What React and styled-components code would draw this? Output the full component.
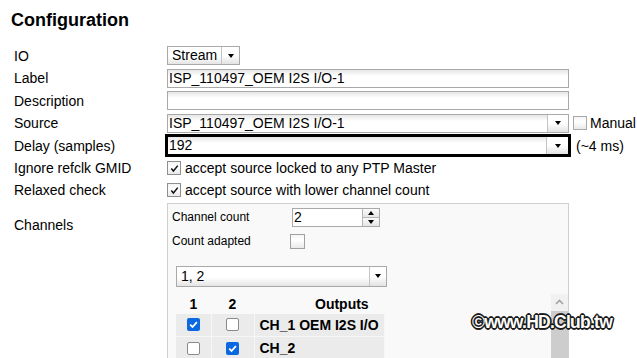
import React from 'react';
import styled, { createGlobalStyle } from 'styled-components';

const GlobalStyle = createGlobalStyle`
  html, body { margin: 0; padding: 0; background: #fff; }
  body {
    font-family: "Liberation Sans", Arial, sans-serif;
    font-size: 14px;
    color: #000;
    overflow: hidden;
  }
  * { box-sizing: border-box; }
`;

const Page = styled.div`
  position: relative;
  width: 637px;
  height: 358px;
  overflow: hidden;
  padding: 10px 0 0 11px;
`;

const Title = styled.h2`
  margin: 0;
  font-size: 18px;
  font-weight: bold;
  line-height: 21px;
`;

const Form = styled.div`
  margin-top: 15px;
  padding-left: 3px;
  display: grid;
  grid-template-columns: 153px auto;
  row-gap: 3.5px;
`;

const Label = styled.div`
  display: flex;
  align-items: ${(p) => (p.$top ? 'flex-start' : 'center')};
  padding-top: ${(p) => (p.$top ? '14px' : '0')};
  line-height: 16px;
  white-space: nowrap;
`;

const Control = styled.div`
  display: flex;
  align-items: center;
  min-height: ${(p) => p.$h || 19}px;
`;

const TextBox = styled.div`
  width: ${(p) => p.$w || 402}px;
  height: 19px;
  border: 1px solid #a9a9a9;
  background: linear-gradient(#e6e6e6, #ffffff 6px);
  padding: 0 1px;
  line-height: 17px;
  white-space: nowrap;
  overflow: hidden;
`;

const SelectBox = styled.div`
  display: flex;
  width: ${(p) => p.$w}px;
  height: ${(p) => p.$h || 19}px;
  border: 1px solid #a9a9a9;
  background: ${(p) =>
    p.$button
      ? 'linear-gradient(#ffffff, #ffffff 55%, #e4e4e4)'
      : 'linear-gradient(#e6e6e6, #ffffff 6px)'};
  outline: ${(p) => (p.$focused ? '3px solid #000' : 'none')};
  outline-offset: -1px;
`;

const SelectValue = styled.div`
  flex: 1;
  padding-left: ${(p) => p.$pad || 1}px;
  line-height: ${(p) => p.$lh || 17}px;
  white-space: nowrap;
  overflow: hidden;
`;

const ArrowButton = styled.div`
  width: ${(p) => p.$w || 20}px;
  border-left: 1px solid #c4c4c4;
  background: linear-gradient(#ffffff, #ffffff 50%, #e2e2e2);
  display: flex;
  align-items: center;
  justify-content: center;
`;

const Triangle = styled.span`
  width: 0;
  height: 0;
  border-left: 3.5px solid transparent;
  border-right: 3.5px solid transparent;
  border-${(p) => (p.$up ? 'bottom' : 'top')}: 4px solid #000;
`;

const CheckBox = styled.span`
  display: inline-flex;
  align-items: center;
  justify-content: center;
  flex: none;
  width: ${(p) => p.$size || 13}px;
  height: ${(p) => p.$size || 13}px;
  border: 1px solid ${(p) => p.$border || '#8f8f8f'};
  background: linear-gradient(#f4f4f4, #ffffff 40%, #e9e9e9);
  margin-left: ${(p) => p.$ml || 0}px;
`;

const ModernBox = styled.span`
  display: inline-flex;
  align-items: center;
  justify-content: center;
  width: 13px;
  height: 13px;
  border-radius: 2px;
  border: ${(p) => (p.$checked ? 'none' : '1.5px solid #8a8a8a')};
  background: ${(p) => (p.$checked ? '#0b68e0' : '#fff')};
`;

const InlineText = styled.span`
  margin-left: ${(p) => p.$ml || 0}px;
  white-space: nowrap;
  line-height: 16px;
`;

const Panel = styled.div`
  width: 402px;
  height: 170px;
  border: 1px solid #cfcfcf;
  background: #f9f9f9;
  padding: 4px 0 0 4px;
`;

const PanelGrid = styled.div`
  display: grid;
  grid-template-columns: 120px auto;
  row-gap: 7px;
  font-size: 12px;
`;

const PanelLabel = styled.div`
  display: flex;
  align-items: center;
  line-height: 14px;
`;

const Spinner = styled.div`
  display: flex;
  width: 88px;
  height: 19px;
  border: 1px solid #a9a9a9;
  background: #fff;
  font-size: 14px;
`;

const SpinButtons = styled.div`
  width: 17px;
  display: flex;
  flex-direction: column;
`;

const SpinHalf = styled.div`
  flex: 1;
  display: flex;
  align-items: center;
  justify-content: center;
  border-left: 1px solid #b5b5b5;
  border-top: ${(p) => (p.$up ? 'none' : '1px solid #b5b5b5')};
  background: linear-gradient(#fafafa, #e6e6e6);
`;

const ChannelSelectWrap = styled.div`
  margin: 17px 0 0 4px;
`;

const TableArea = styled.div`
  margin: 7px 0 0 4px;
  display: flex;
  justify-content: space-between;
  height: 80px;
`;

const Table = styled.table`
  border-collapse: collapse;
  table-layout: fixed;
  width: 208px;
  height: fit-content;
  font-size: 14px;
  font-weight: bold;
`;

const Th = styled.th`
  height: 20px;
  padding: 0 0 0 ${(p) => p.$pad || 0}px;
  text-align: ${(p) => (p.$pad ? 'left' : 'center')};
  vertical-align: middle;
  line-height: 16px;
`;

const Td = styled.td`
  height: 23px;
  padding: 0 0 0 ${(p) => (p.$text ? 5 : 0)}px;
  background: #ebebeb;
  border-right: 1px solid #f6f6f6;
  border-bottom: 1px solid #f6f6f6;
  text-align: ${(p) => (p.$text ? 'left' : 'center')};
  vertical-align: middle;
  white-space: nowrap;
  line-height: 16px;
`;

const CellInner = styled.div`
  display: flex;
  align-items: center;
  justify-content: center;
`;

const Scrollbar = styled.div`
  width: 17px;
  height: 100%;
  background: #f1f1f1;
  display: flex;
  flex-direction: column;
`;

const ScrollArrow = styled.div`
  height: 17px;
  display: flex;
  align-items: center;
  justify-content: center;
`;

const ScrollThumb = styled.div`
  flex: 1;
  background: #cdcdcd;
`;

const Watermark = styled.div`
  position: absolute;
  left: 472px;
  top: 312px;
  font-family: "Liberation Sans", Arial, sans-serif;
  font-weight: bold;
  font-size: 17.5px;
  letter-spacing: -0.75px;
  color: #fff;
  white-space: nowrap;
  text-shadow:
    1px 0 0 #1a1a1a, -1px 0 0 #1a1a1a, 0 1px 0 #1a1a1a, 0 -1px 0 #1a1a1a,
    1px 1px 0 #1a1a1a, -1px -1px 0 #1a1a1a, 1px -1px 0 #1a1a1a, -1px 1px 0 #1a1a1a,
    1.6px 0 0 #333, -1.6px 0 0 #333, 0 1.6px 0 #333, 0 -1.6px 0 #333;
`;

const OldCheck = () => (
  <svg width="11" height="11" viewBox="0 0 11 11">
    <path d="M2.3 5.6 L4.4 8 L8.8 2.6" fill="none" stroke="#111" strokeWidth="1.5" />
  </svg>
);

const BlueCheck = () => (
  <svg width="11" height="11" viewBox="0 0 11 11">
    <path d="M2.2 5.7 L4.5 8 L8.9 3.2" fill="none" stroke="#fff" strokeWidth="1.8" />
  </svg>
);

const ScrollUp = () => (
  <svg width="9" height="6" viewBox="0 0 9 6">
    <path d="M1 5 L4.5 1.5 L8 5" fill="none" stroke="#a3a3a3" strokeWidth="1.6" />
  </svg>
);

function Select({ value, width, focused, button, h, arrowW }) {
  return (
    <SelectBox $w={width} $focused={focused} $button={button} $h={h}>
      <SelectValue $pad={button ? 4 : 1} $lh={(h || 19) - 2}>{value}</SelectValue>
      <ArrowButton $w={arrowW}>
        <Triangle />
      </ArrowButton>
    </SelectBox>
  );
}

const rows = [
  { a: true, b: false, name: 'CH_1', out: 'OEM I2S I/O' },
  { a: false, b: true, name: 'CH_2', out: '' },
];

export default function App() {
  return (
    <>
      <GlobalStyle />
      <Page>
        <Title>Configuration</Title>
        <Form>
          <Label>IO</Label>
          <Control>
            <Select value="Stream" width={73} button arrowW={18} />
          </Control>

          <Label>Label</Label>
          <Control>
            <TextBox>ISP_110497_OEM I2S I/O-1</TextBox>
          </Control>

          <Label>Description</Label>
          <Control>
            <TextBox />
          </Control>

          <Label>Source</Label>
          <Control>
            <Select value="ISP_110497_OEM I2S I/O-1" width={402} arrowW={21} />
            <CheckBox $size={14} $border="#a9a9a9" $ml={4} />
            <InlineText $ml={3}>Manual</InlineText>
          </Control>

          <Label>Delay (samples)</Label>
          <Control>
            <Select value="192" width={402} focused arrowW={22} />
            <InlineText $ml={7}>(~4 ms)</InlineText>
          </Control>

          <Label>Ignore refclk GMID</Label>
          <Control $h={19}>
            <CheckBox $size={14}>
              <OldCheck />
            </CheckBox>
            <InlineText $ml={4}>accept source locked to any PTP Master</InlineText>
          </Control>

          <Label>Relaxed check</Label>
          <Control $h={18}>
            <CheckBox $size={14}>
              <OldCheck />
            </CheckBox>
            <InlineText $ml={4}>accept source with lower channel count</InlineText>
          </Control>

          <Label $top>Channels</Label>
          <Panel>
            <PanelGrid>
              <PanelLabel>Channel count</PanelLabel>
              <Spinner>
                <SelectValue>2</SelectValue>
                <SpinButtons>
                  <SpinHalf $up>
                    <Triangle $up />
                  </SpinHalf>
                  <SpinHalf>
                    <Triangle />
                  </SpinHalf>
                </SpinButtons>
              </Spinner>
              <PanelLabel>Count adapted</PanelLabel>
              <CheckBox $size={15} $border="#a0a0a0" $ml={-2} />
            </PanelGrid>
            <ChannelSelectWrap>
              <Select value="1, 2" width={211} h={21} arrowW={17} button />
            </ChannelSelectWrap>
            <TableArea>
              <Table>
                <colgroup>
                  <col style={{ width: 35 }} />
                  <col style={{ width: 43 }} />
                  <col style={{ width: 130 }} />
                </colgroup>
                <thead>
                  <tr>
                    <Th>1</Th>
                    <Th>2</Th>
                    <Th $pad={61}>Outputs</Th>
                  </tr>
                </thead>
                <tbody>
                  {rows.map((r) => (
                    <tr key={r.name}>
                      <Td>
                        <CellInner>
                          <ModernBox $checked={r.a}>{r.a && <BlueCheck />}</ModernBox>
                        </CellInner>
                      </Td>
                      <Td>
                        <CellInner>
                          <ModernBox $checked={r.b}>{r.b && <BlueCheck />}</ModernBox>
                        </CellInner>
                      </Td>
                      <Td $text>
                        {r.name}
                        {r.out ? ' ' + r.out : ''}
                      </Td>
                    </tr>
                  ))}
                </tbody>
              </Table>
              <Scrollbar>
                <ScrollArrow>
                  <ScrollUp />
                </ScrollArrow>
                <ScrollThumb />
              </Scrollbar>
            </TableArea>
          </Panel>
        </Form>
        <Watermark>©www.HD.Club.tw</Watermark>
      </Page>
    </>
  );
}
